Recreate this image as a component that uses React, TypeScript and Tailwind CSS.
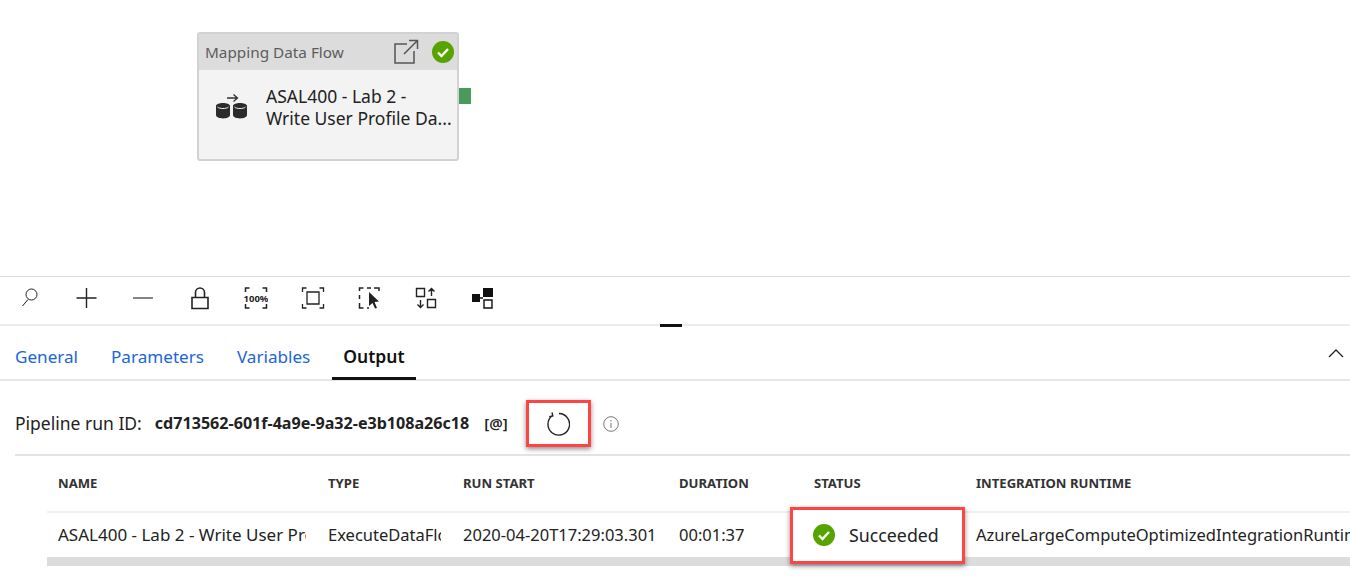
const font = { fontFamily: '"Noto Sans", sans-serif' }

const SuccessIcon = ({ className }: { className: string }) => (
  <svg viewBox="0 0 22 22" className={className}>
    <circle cx="11" cy="11" r="11" fill="#57a300" />
    <path d="M6 11.5l3.5 3.5 6.5-7" fill="none" stroke="#fff" strokeWidth="2.4" />
  </svg>
)

const ToolIcon = ({ children }: { children: React.ReactNode }) => (
  <svg viewBox="0 0 24 24" className="size-6 shrink-0" fill="none" stroke="#222" strokeWidth="1.4">
    {children}
  </svg>
)

const toolIcons = [
  <path key="s" d="M4.500 20l5.500-6.500M19 8.500a5.500 5.500 0 1 1-11 0 5.500 5.500 0 0 1 11 0z" strokeWidth="1" />,
  <path key="p" d="M11.500 2v20M1.500 12h20" />,
  <path key="m" d="M2 12h20" strokeWidth="1.1" />,
  <path key="l" d="M4 11.500h16v11H4zM7.500 11.500v-5a4.500 4.500 0 0 1 9 0v5" strokeWidth="1.6" />,
  <g key="z">
    <path d="M1.500 6V2h4M18.500 2h4v4M22.500 18v4h-4M5.500 22h-4v-4" strokeWidth="1.5" />
    <text x="12" y="15.500" textAnchor="middle" fontSize="9.500" fontWeight="700" fill="#222" stroke="none">100%</text>
  </g>,
  <path key="f" d="M1.500 6V2h4M18.500 2h4v4M22.500 18v4h-4M5.500 22h-4v-4M6 6h12v12H6z" strokeWidth="1.3" />,
  <g key="c">
    <path d="M1.500 5V2h4M9 2h4M16 2h5v3M1.500 9v4M1.500 17v5h4M9 22h2" strokeWidth="1.5" />
    <path d="M11 6l10 9.500-4.500.5 2.500 6-2 .5-2.500-5.500-3.500 3z" fill="#222" stroke="none" />
  </g>,
  <path key="a" d="M2.500 2.500h8v8h-8zM13.500 13.500h8v8h-8zM17.500 10V2.500M14.500 5.500l3-3 3 3M6.500 14v7.500M3.500 18.500l3 3 3-3" strokeWidth="1.4" />,
  <g key="g">
    <path d="M1 8h8v8H1zM12 2h10v9H12z" fill="#111" stroke="none" />
    <path d="M9 12h3M13 14h8v8h-8z" stroke="#111" strokeWidth="1.4" />
  </g>,
]

const columns = [
  { name: 'NAME', value: 'ASAL400 - Lab 2 - Write User Profile Data', width: 'w-[270px]', inner: 'w-[248px] text-[17px]' },
  { name: 'TYPE', value: 'ExecuteDataFlow', width: 'w-[135px]', inner: 'w-[113px]' },
  { name: 'RUN START', value: '2020-04-20T17:29:03.301', width: 'w-[216px]', inner: 'w-[200px]' },
  { name: 'DURATION', value: '00:01:37', width: 'w-[135px]', inner: 'w-[120px]' },
]

export default function App() {
  return (
    <div style={font} className="h-[577px] w-[1350px] overflow-hidden bg-white text-[#222]">
      {/* canvas */}
      <div className="relative h-[277px] border-b border-[#dcdcdc]">
        <div className="absolute left-[197px] top-[32px] h-[129px] w-[262px] overflow-hidden rounded-[3px] border-2 border-[#d2d2d2] bg-[#f3f3f3]">
          <div className="flex h-[36px] items-center bg-[#dcdcdc] pl-[6px] pr-[3px]">
            <span className="text-[15.300px] text-[#5c5c5c]">Mapping Data Flow</span>
            <svg viewBox="0 0 26 26" className="ml-auto size-[26px]" fill="none" stroke="#555" strokeWidth="1.500">
              <path d="M14 5H2v19h19V12M11 15L24.500 1.500M16 1.500h8.500V10" />
            </svg>
            <SuccessIcon className="ml-[13px] size-[22px]" />
          </div>
          <div className="flex pl-[16px] pt-[15px]">
            <svg viewBox="0 0 34 26" className="mt-[8px] h-[26px] w-[34px] shrink-0">
              <path d="M12 5h10M18.500 1.500L22.500 5l-4 3.500" fill="none" stroke="#333" strokeWidth="1.300" />
              <path d="M1 13c0-4 14-4 14 0v9c0 4.500-14 4.500-14 0zM18 13c0-4 14-4 14 0v9c0 4.500-14 4.500-14 0z" fill="#2b2b2b" />
              <path d="M2.500 14c2 2 9 2 11 0M19.500 14c2 2 9 2 11 0" fill="none" stroke="#f3f3f3" strokeWidth="1" />
            </svg>
            <div className="ml-[17px] w-[190px] whitespace-nowrap text-[17.500px] leading-[22px] text-[#222]">
              <div>ASAL400 - Lab 2 -</div>
              <div>Write User Profile Da...</div>
            </div>
          </div>
        </div>
        <div className="absolute left-[459px] top-[88px] h-[16px] w-[12px] bg-[#4a9a5c]" />
      </div>

      {/* toolbar */}
      <div className="flex h-[49px] items-center gap-[32.600px] border-b-2 border-[#ececec] pb-[5px] pl-[18px]">
        {toolIcons.map((icon, i) => (
          <ToolIcon key={i}>{icon}</ToolIcon>
        ))}
      </div>

      {/* tabs */}
      <div className="relative flex h-[55px] items-end border-b-2 border-[#e6e6e6] pl-[15px] text-[17.100px] leading-[24px]">
        <div className="absolute left-[660px] top-[-2px] h-[3px] w-[22px] bg-[#111]" />
        <span className="mb-[10px] text-[#1a66d6]">General</span>
        <span className="mb-[10px] ml-[33px] text-[#1a66d6]">Parameters</span>
        <span className="mb-[10px] ml-[33px] text-[#1a66d6]">Variables</span>
        <span className="mb-[-1px] ml-[22px] border-b-[3px] border-[#111] px-[11px] pb-[9px] text-[17.500px] font-semibold text-[#111]">Output</span>
        <svg viewBox="0 0 16 10" className="absolute right-[6px] top-[22px] h-[10px] w-[16px]" fill="none" stroke="#222" strokeWidth="1.300">
          <path d="M1 9l7-7 7 7" />
        </svg>
      </div>

      {/* run id */}
      <div className="ml-[15px] flex h-[75px] items-center border-b-2 border-[#e3e3e3] pt-[12px]">
        <span className="text-[17.500px]">Pipeline run ID:</span>
        <span className="ml-[13px] text-[16.100px] font-bold">cd713562-601f-4a9e-9a32-e3b108a26c18</span>
        <span className="ml-[15px] text-[15px] font-semibold">[@]</span>
        <div className="ml-[18px] flex h-[47px] w-[65px] shrink-0 items-center justify-center border-[3px] border-[#f44] shadow-[0_2px_5px_rgba(0,0,0,0.45)]">
          <svg viewBox="0 0 24 24" className="size-[24px]" fill="none" stroke="#222" strokeWidth="1.400">
            <path d="M6.500 3.500A10.800 10.800 0 1 0 13 1.500M6 .5l.8 3.400-3.500.8" />
          </svg>
        </div>
        <svg viewBox="0 0 16 16" className="ml-[12px] size-[16px]" fill="none" stroke="#777" strokeWidth="1">
          <circle cx="8" cy="8" r="7.300" />
          <path d="M8 7v5M8 4v1.500" />
        </svg>
      </div>

      {/* table */}
      <div className="ml-[47px] text-[16.500px]">
        <div className="flex h-[57px] items-center border-b-2 border-[#f0f0f0] pl-[11px] text-[13.100px] font-bold text-[#333]">
          {columns.map(c => (
            <div key={c.name} className={`shrink-0 ${c.width}`}>{c.name}</div>
          ))}
          <div className="w-[162px] shrink-0">STATUS</div>
          <div>INTEGRATION RUNTIME</div>
        </div>
        <div className="flex h-[44px] items-center whitespace-nowrap pl-[11px]">
          {columns.map(c => (
            <div key={c.name} className={`shrink-0 ${c.width}`}>
              <div className={`overflow-hidden ${c.inner}`}>{c.value}</div>
            </div>
          ))}
          <div className="w-[162px] shrink-0">
            <div className="ml-[-24px] flex h-[57px] w-[175px] items-center border-[3px] border-[#f44] bg-white pl-[20px] shadow-[0_2px_5px_rgba(0,0,0,0.45)]">
              <SuccessIcon className="size-[22px] shrink-0" />
              <span className="ml-[14px] text-[17.800px]">Succeeded</span>
            </div>
          </div>
          <div>AzureLargeComputeOptimizedIntegrationRuntime</div>
        </div>
        <div className="h-[9px] bg-[#dcdcdc]" />
      </div>
    </div>
  )
}
